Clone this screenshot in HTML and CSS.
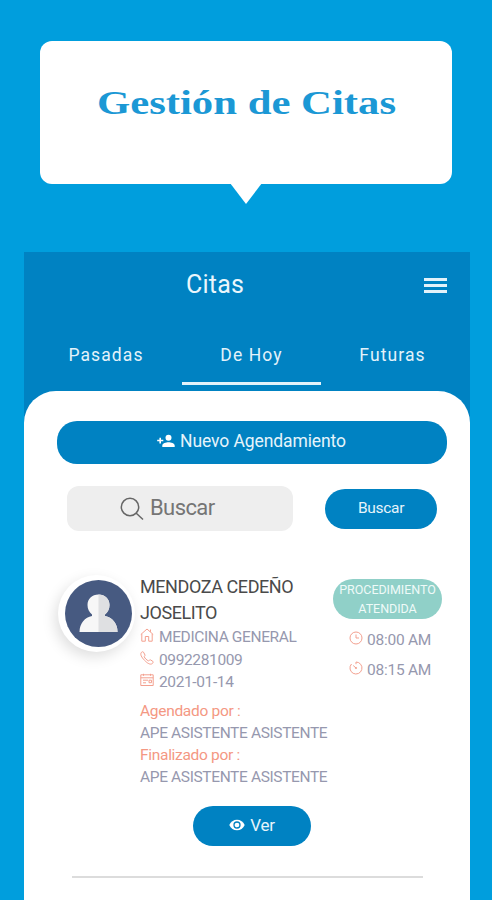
FILE: index.html
```html
<!DOCTYPE html>
<html lang="es">
  <head>
    <meta charset="UTF-8" />
    <meta name="viewport" content="width=device-width, initial-scale=1.0" />
    <title>Gestión de Citas</title>
    <link rel="stylesheet" href="styles.css">
  </head>
  <body>
    <div class="bubble">
      <h1>Gestión de Citas</h1>
      <svg class="tail" width="32" height="21" viewBox="0 0 32 21"><path d="M0 0h32L16 21z" fill="#fff" /></svg>
    </div>
    <div class="phone">
      <header class="top">
        <h2>Citas</h2>
        <div class="menu"><span></span><span></span><span></span></div>
      </header>
      <ul class="tabs">
        <li>Pasadas</li>
        <li class="on">De Hoy</li>
        <li>Futuras</li>
      </ul>
      <main class="panel">
        <button class="btn new">
          <svg width="18" height="14" viewBox="0 0 18 14" fill="#fff">
            <circle cx="11.5" cy="3.7" r="3" />
            <path d="M5.3 13v-1.6c0-2 3.8-3.2 6.2-3.2s6.2 1.2 6.2 3.2V13zM2.4 3.7H4v2.1h2.3v1.5H4v2.1H2.4V7.3H.2V5.8h2.2z" />
          </svg>
          <span>Nuevo Agendamiento</span>
        </button>
        <div class="search">
          <div class="field">
            <svg width="24" height="24" viewBox="0 0 24 24" fill="none" stroke="#666" stroke-width="1.5">
              <circle cx="10" cy="10" r="8.7" />
              <path d="M16 16l7 6.5" />
            </svg>
            <span>Buscar</span>
          </div>
          <button class="btn find"><span>Buscar</span></button>
        </div>
        <article class="cita">
          <div class="avatar">
            <svg width="67" height="67" viewBox="0 0 67 67">
              <circle cx="33.5" cy="33.5" r="33.5" fill="#475a81" />
              <path d="M33.5 14.500C27 14.500 22.500 19 22.500 25c0 4 1.500 7 4.500 9.500v1.500c-7 1.500-12.500 7-12.500 16h38c0-9-5.500-14.500-12.500-16v-1.500c3-2.500 4.500-5.500 4.500-9.500 0-6-4.500-10.500-11-10.500z" fill="#f7f7f7" />
              <path d="M33.5 14.500C40 14.500 44.500 19 44.500 25c0 4-1.500 7-4.500 9.500v1.500c7 1.500 12.500 7 12.500 16h-19z" fill="#dfe0e2" />
            </svg>
          </div>
          <div class="info">
            <h3>MENDOZA CEDEÑO<br>JOSELITO</h3>
            <p class="row">
              <svg width="14" height="14" viewBox="0 0 14 14"><path d="M.8 6.500L7 1l6.200 5.500M1.800 6V13.200h3.500V8.500h3.400v4.700h3.500V6M10.500 1.500v2.300" /></svg>
              <span>MEDICINA GENERAL</span>
            </p>
            <p class="row">
              <svg width="14" height="14" viewBox="0 0 14 14"><path d="M1.500 1.300C.2 2.800.7 5 3.500 8.200s5.800 5.500 8 4.800c1.500-.5 2-2 1.300-2.700L10.500 8.900c-.8-.4-1.500 1.200-2.200.9C6.800 9.200 5 7.300 4.300 6c-.4-.8 1-1.200.7-2L3.500 1.200c-.5-.8-1.300-.5-2 .1z" /></svg>
              <span>0992281009</span>
            </p>
            <p class="row">
              <svg width="14" height="14" viewBox="0 0 14 14"><path d="M.8 1.800h12.400v10.700H.8zM.8 4.800h12.400M3.500.8v2M10.500.8v2M3 7.200h5M3 9.800h3M9 7.200h2.500v2.500H9z" /></svg>
              <span>2021-01-14</span>
            </p>
            <div class="by">
              <p class="label">Agendado por :</p>
              <p>APE ASISTENTE ASISTENTE</p>
              <p class="label">Finalizado por :</p>
              <p>APE ASISTENTE ASISTENTE</p>
            </div>
          </div>
          <div class="state">
            <div class="badge">PROCEDIMIENTO<br>ATENDIDA</div>
            <p class="time">
              <svg width="14" height="14" viewBox="0 0 14 14"><circle cx="7" cy="7" r="6" /><path d="M7 3.500V7h3" /></svg>
              <span>08:00 AM</span>
            </p>
            <p class="time">
              <svg width="14" height="14" viewBox="0 0 14 14"><path d="M7 3.200V1A6 6 0 1 1 2.500 3M4.200 4.500L7 7" /><circle cx="7" cy="7" r=".7" /></svg>
              <span>08:15 AM</span>
            </p>
          </div>
        </article>
        <button class="btn ver">
          <svg width="16" height="12" viewBox="0 0 16 12">
            <path d="M.3 6C1.800 2.700 4.600.7 8 .7S14.200 2.700 15.700 6C14.200 9.300 11.400 11.300 8 11.300S1.800 9.300.3 6z" fill="#fff" />
            <circle cx="8" cy="6" r="3" fill="#fff" stroke="#0082c2" stroke-width="1.300" />
          </svg>
          <span>Ver</span>
        </button>
        <hr>
      </main>
    </div>
  </body>
</html>
```
FILE: styles.css
```css
* {
  margin: 0;
  padding: 0;
  box-sizing: border-box;
}
body {
  width: 492px;
  height: 900px;
  overflow: hidden;
  background: #009edd;
  font-family: Roboto, sans-serif;
}
ul {
  list-style: none;
}
svg {
  display: block;
  flex: none;
}
.bubble {
  position: relative;
  width: 412px;
  height: 143px;
  margin: 41px 0 0 40px;
  padding: 42px 0 0 1px;
  border-radius: 12px;
  background: #fff;
}
.bubble h1 {
  font: bold 33px/41px "Liberation Serif", serif;
  color: #1b98d5;
  text-align: center;
  white-space: nowrap;
  transform: scaleX(1.295);
}
.tail {
  position: absolute;
  left: 190px;
  top: 142px;
}
.phone {
  width: 446px;
  height: 648px;
  margin: 68px 0 0 24px;
  background: #0082c2;
}
.top {
  display: flex;
  justify-content: space-between;
  align-items: center;
  height: 66px;
  padding: 0 23px 0 162px;
}
.top h2 {
  padding-bottom: 2px;
  font-size: 25px;
  font-weight: 400;
  letter-spacing: 0.2px;
  color: #eaf6fc;
}
.menu {
  display: flex;
  flex-direction: column;
  gap: 3px;
  width: 23px;
}
.menu span {
  height: 3px;
  background: #e3f2fa;
}
.tabs {
  display: grid;
  grid-template-columns: 158px 139px 149px;
  height: 73px;
}
.tabs li {
  height: 67px;
  padding-top: 25px;
  font-size: 17.5px;
  font-weight: 400;
  line-height: 24px;
  letter-spacing: 1.1px;
  text-align: center;
  color: #e3f2fa;
}
.tabs li:first-child {
  padding-left: 6px;
}
.tabs li:last-child {
  padding-right: 6px;
}
.tabs .on {
  border-bottom: 3px solid #e3f2fa;
}
.panel {
  height: 509px;
  padding-top: 30px;
  border-radius: 32px 32px 0 0;
  background: #fff;
}
.btn {
  display: flex;
  justify-content: center;
  align-items: center;
  border: none;
  background: #0082c2;
  font-family: inherit;
  color: #e6f4fb;
}
.new {
  gap: 5px;
  width: 390px;
  height: 43px;
  margin-left: 33px;
  padding: 0 1px 3px 0;
  border-radius: 20px;
  font-size: 17.5px;
  letter-spacing: -0.1px;
}
.search {
  display: flex;
  align-items: center;
  gap: 32px;
  margin: 22px 0 0 43px;
}
.field {
  display: flex;
  align-items: center;
  gap: 6px;
  width: 226px;
  height: 45px;
  padding: 0 0 2px 53px;
  border-radius: 12px;
  background: #eee;
  font-size: 22px;
  letter-spacing: -0.6px;
  color: #757575;
}
.field svg {
  margin-top: 2px;
}
.find {
  width: 112px;
  height: 40px;
  padding-bottom: 1px;
  border-radius: 20px;
  font-size: 15.5px;
  letter-spacing: -0.3px;
}
.cita {
  display: flex;
  height: 227px;
  margin-top: 43px;
  padding-left: 34px;
}
.avatar {
  width: 77px;
  height: 77px;
  margin-top: 1px;
  padding: 5px 5px 5px 7px;
  border-radius: 50%;
  background: #fff;
  box-shadow: -3px 5px 14px rgba(0, 0, 0, 0.13);
}
.info {
  width: 193px;
  margin-left: 5px;
  white-space: nowrap;
  font-size: 15.5px;
  letter-spacing: -0.37px;
  color: #9698ae;
}
.info h3 {
  font-size: 18px;
  font-weight: 400;
  line-height: 26px;
  letter-spacing: -0.42px;
  color: #4a4a4a;
}
.row {
  display: flex;
  gap: 5px;
  line-height: 22.5px;
}
.row svg,
.time svg {
  margin-top: 2px;
  fill: none;
  stroke: #f3a08f;
}
.by {
  margin-top: 6px;
  line-height: 22.3px;
}
.label {
  letter-spacing: -0.3px;
  color: #f49883;
}
.state {
  padding-top: 5px;
  white-space: nowrap;
  font-size: 15.5px;
  letter-spacing: -0.25px;
  color: #9698ae;
}
.badge {
  width: 109px;
  height: 40px;
  margin-bottom: 6px;
  padding-top: 2px;
  border-radius: 20px;
  background: #90d0c8;
  font-size: 12.5px;
  line-height: 18.5px;
  letter-spacing: -0.05px;
  text-align: center;
  color: #effaf8;
}
.time {
  display: flex;
  gap: 4px;
  padding-left: 16px;
  line-height: 30px;
}
.time svg {
  margin-top: 6px;
}
.ver {
  gap: 5px;
  width: 118px;
  height: 40px;
  margin: 5px 0 0 169px;
  padding-bottom: 2px;
  border-radius: 20px;
  font-size: 17px;
  letter-spacing: -0.3px;
}
hr {
  width: 351px;
  height: 2px;
  margin: 30px 0 0 48px;
  border: none;
  background: #dcdcdc;
}
```
